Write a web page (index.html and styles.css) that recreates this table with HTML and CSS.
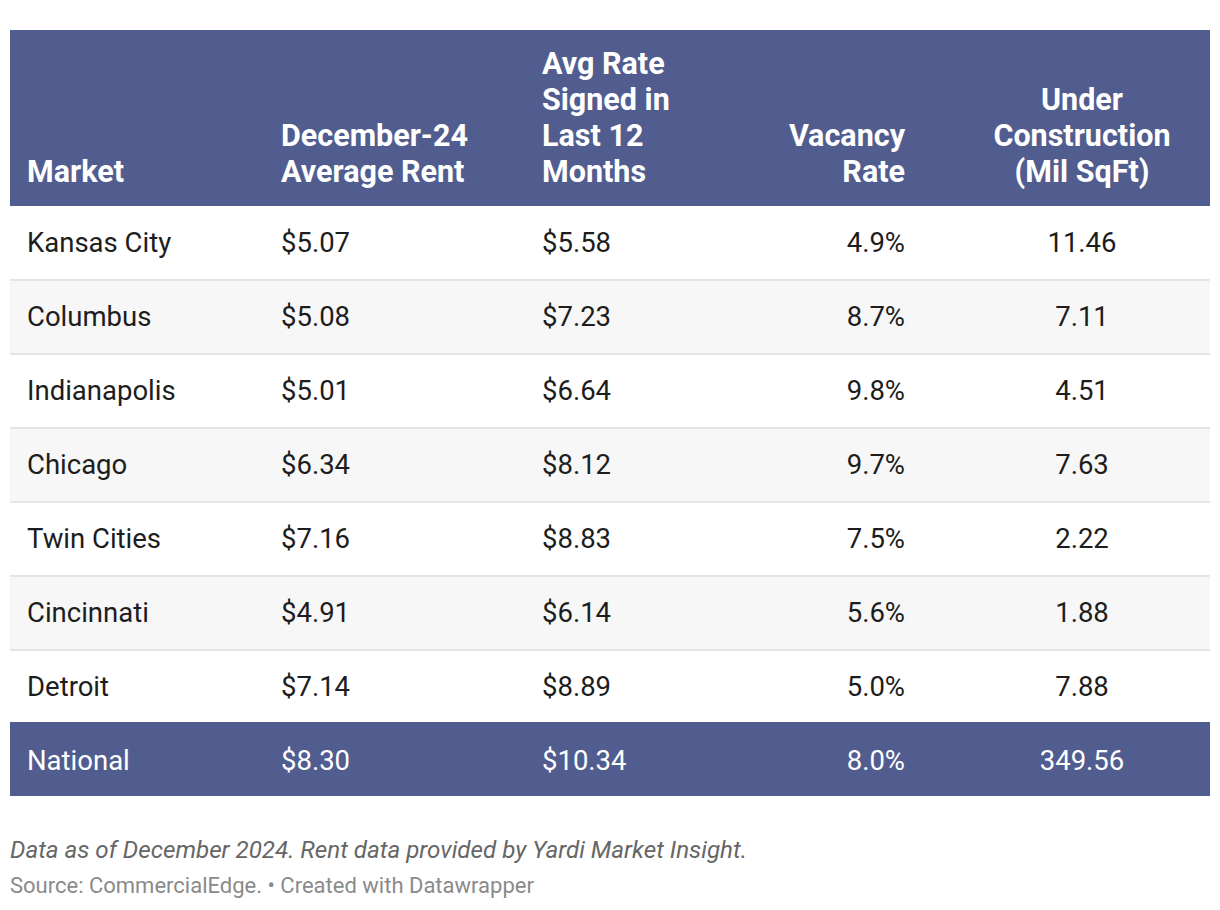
FILE: index.html
```html
<!DOCTYPE html>
<html>
<head>
<meta charset="utf-8">
<link rel="stylesheet" href="styles.css">
</head>
<body>
<div class="chart">
  <table class="tbl">
    <colgroup>
      <col class="c1"><col class="c2"><col class="c3"><col class="c4"><col class="c5">
    </colgroup>
    <thead>
      <tr>
        <th class="left">Market</th>
        <th class="left">December-24<br>Average Rent</th>
        <th class="left">Avg Rate<br>Signed in<br>Last 12<br>Months</th>
        <th class="right">Vacancy<br>Rate</th>
        <th class="center">Under<br>Construction<br>(Mil SqFt)</th>
      </tr>
    </thead>
    <tbody>
      <tr><td class="left">Kansas City</td><td class="left">$5.07</td><td class="left">$5.58</td><td class="right">4.9%</td><td class="center">11.46</td></tr>
      <tr class="alt"><td class="left">Columbus</td><td class="left">$5.08</td><td class="left">$7.23</td><td class="right">8.7%</td><td class="center">7.11</td></tr>
      <tr><td class="left">Indianapolis</td><td class="left">$5.01</td><td class="left">$6.64</td><td class="right">9.8%</td><td class="center">4.51</td></tr>
      <tr class="alt"><td class="left">Chicago</td><td class="left">$6.34</td><td class="left">$8.12</td><td class="right">9.7%</td><td class="center">7.63</td></tr>
      <tr><td class="left">Twin Cities</td><td class="left">$7.16</td><td class="left">$8.83</td><td class="right">7.5%</td><td class="center">2.22</td></tr>
      <tr class="alt"><td class="left">Cincinnati</td><td class="left">$4.91</td><td class="left">$6.14</td><td class="right">5.6%</td><td class="center">1.88</td></tr>
      <tr class="last"><td class="left">Detroit</td><td class="left">$7.14</td><td class="left">$8.89</td><td class="right">5.0%</td><td class="center">7.88</td></tr>
      <tr class="national"><td class="left">National</td><td class="left">$8.30</td><td class="left">$10.34</td><td class="right">8.0%</td><td class="center">349.56</td></tr>
    </tbody>
  </table>
  <div class="notes">Data as of December 2024. Rent data provided by Yardi Market Insight.</div>
  <div class="source">Source: CommercialEdge. • Created with Datawrapper</div>
</div>
</body>
</html>
```
FILE: styles.css
```css
html, body {
  margin: 0;
  padding: 0;
  background: #ffffff;
}
body {
  font-family: Roboto, "Liberation Sans", sans-serif;
  color: #1d1d1d;
}
.chart {
  padding: 30px 10px 0 10px;
}
.tbl {
  width: 1200px;
  border-collapse: collapse;
  table-layout: fixed;
}
.c1 { width: 254px; }
.c2 { width: 261px; }
.c3 { width: 185px; }
.c4 { width: 244px; }
.c5 { width: 256px; }
.tbl thead tr {
  background: #525d8f;
}
.tbl th {
  color: #ffffff;
  font-weight: 700;
  font-size: 30.5px;
  line-height: 36px;
  white-space: nowrap;
  vertical-align: bottom;
  padding: 16px 17px 16px 17px;
}
.tbl td {
  font-size: 27.5px;
  line-height: 30px;
  height: 74px;
  padding: 0 17px;
  box-sizing: border-box;
  vertical-align: middle;
  white-space: nowrap;
  border-bottom: 2px solid #e5e5e5;
}
.tbl tr.alt td {
  background: #f7f7f7;
}
.tbl tr.last td {
  border-bottom: none;
  height: 72px;
}
.tbl tr.national td {
  background: #525d8f;
  color: #ffffff;
  border-bottom: none;
  height: 74px;
  padding-top: 3px;
}
.left { text-align: left; }
.right { text-align: right; }
.tbl .right { padding-right: 49px; }
.center { text-align: center; }
.notes {
  margin-top: 39px;
  font-size: 24.2px;
  line-height: 30px;
  font-style: italic;
  color: #666666;
}
.source {
  margin-top: 6px;
  font-size: 22px;
  line-height: 30px;
  color: #8a8a8a;
}
```
